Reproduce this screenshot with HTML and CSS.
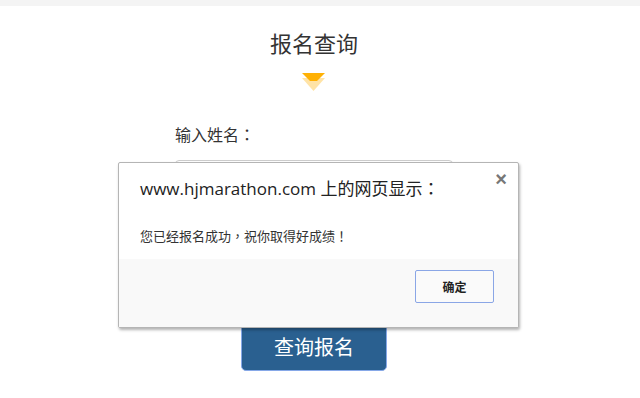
FILE: index.html
```html
<!DOCTYPE html>
<html lang="zh">
<head>
<meta charset="utf-8">
<link rel="stylesheet" href="styles.css">
</head>
<body>
<div class="topbar"></div>
<main class="page">
  <h1 class="title">报名查询</h1>
  <svg class="arrow" width="24" height="19" viewBox="0 0 24 19">
    <polygon points="0,5 23,5 11.5,18" fill="#ffe3a6"/>
    <polygon points="0,0 23,0 15,8 8,8" fill="#ffb104"/>
  </svg>
  <form class="form">
    <label class="label">输入姓名<span class="punct" lang="zh-Hant-TW">：</span></label>
    <div class="input"></div>
    <button type="button" class="submit">查询报名</button>
  </form>
</main>
<div class="dialog">
  <div class="dlg-head">
    <span class="dlg-title">www.hjmarathon.com 上的网页显示<span class="punct" lang="zh-Hant-TW">：</span></span>
    <span class="dlg-close">×</span>
  </div>
  <div class="dlg-msg">您已经报名成功<span class="punct" lang="zh-Hant-TW">，</span>祝你取得好成绩<span class="punct" lang="zh-Hant-TW">！</span></div>
  <div class="dlg-foot"><button type="button" class="ok">确定</button></div>
</div>
</body>
</html>
```

FILE: styles.css
```css
html, body {
  margin: 0;
  padding: 0;
  background: #fff;
  font-family: "Noto Sans CJK SC", "Liberation Sans", sans-serif;
}
.punct {
  font-family: "Noto Sans CJK TC", "Noto Sans CJK SC", sans-serif;
}
.topbar {
  height: 6px;
  background: #f4f4f4;
}
.page {
  display: flex;
  flex-direction: column;
  align-items: center;
}
.title {
  margin: 21px 0 0 0;
  font-size: 22px;
  line-height: 30px;
  font-weight: 400;
  color: #333;
  transform: translateX(-6px);
}
.arrow {
  display: block;
  margin-top: 16px;
  transform: translateX(-6px);
}
.form {
  width: 278px;
  margin-top: 32px;
  display: flex;
  flex-direction: column;
  transform: translateX(-6px);
}
.label {
  font-size: 16px;
  line-height: 20px;
  color: #333;
}
.input {
  margin-top: 16px;
  height: 38px;
  border: 1px solid #ccc;
  border-radius: 4px;
}
.submit {
  align-self: center;
  margin-top: 122px;
  width: 146px;
  height: 49px;
  background: #2a6090;
  border: 1px solid #86a8e8;
  border-radius: 0 0 5px 5px;
  color: #fff;
  font-family: "Noto Sans CJK SC", sans-serif;
  font-size: 20px;
  padding: 0;
}
.dialog {
  position: absolute;
  left: 118px;
  top: 162px;
  width: 399px;
  height: 164px;
  border: 1px solid #b5b5b5;
  border-radius: 2px;
  background: #fff;
  box-shadow: 1px 2px 3px rgba(0,0,0,0.3);
  display: flex;
  flex-direction: column;
}
.dlg-head {
  height: 49px;
  display: flex;
  align-items: flex-start;
  justify-content: space-between;
  padding: 0 11px 0 21px;
}
.dlg-title {
  margin-top: 13px;
  font-family: "Open Sans", "Noto Sans CJK SC", sans-serif;
  font-size: 17px;
  line-height: 24px;
  color: #222;
}
.dlg-close {
  margin-top: 5px;
  font-family: "Liberation Sans", sans-serif;
  font-size: 20px;
  font-weight: 700;
  color: #777;
}
.dlg-msg {
  height: 47px;
  padding: 0 21px;
  display: flex;
  align-items: center;
  font-size: 13px;
  color: #333;
}
.dlg-foot {
  flex: 1;
  background: #f9f9f9;
  display: flex;
  align-items: flex-start;
  justify-content: flex-end;
  padding: 11px 24px 0 0;
}
.ok {
  width: 79px;
  height: 33px;
  background: #fafafa;
  border: 1px solid #8aa6e6;
  border-radius: 2px;
  font-family: "Noto Sans CJK SC", sans-serif;
  font-size: 12px;
  font-weight: 700;
  color: #222;
  padding: 0;
}
```
